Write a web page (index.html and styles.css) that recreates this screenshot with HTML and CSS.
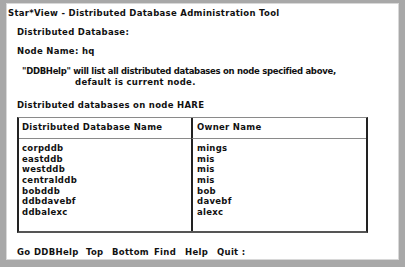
FILE: index.html
```html
<!DOCTYPE html>
<html lang="en">
  <head>
    <meta charset="UTF-8" />
    <title>Star*View - Distributed Database Administration Tool</title>
    <link rel="stylesheet" href="styles.css">
  </head>
  <body>
    <div class="screen">
      <div class="title">Star*View - Distributed Database Administration Tool</div>

      <div class="field first">Distributed Database:</div>
      <div class="field">Node Name: hq</div>

      <div class="help">
        <div class="help-line">"DDBHelp" will list all distributed databases on node specified above,</div>
        <div class="help-cont">default is current node.</div>
      </div>

      <div class="caption">Distributed databases on node HARE</div>

      <div class="ddb-table">
        <div class="cell head">Distributed Database Name</div>
        <div class="cell head right">Owner Name</div>
        <div class="cell body">
          <div>corpddb</div>
          <div>eastddb</div>
          <div>westddb</div>
          <div>centralddb</div>
          <div>bobddb</div>
          <div>ddbdavebf</div>
          <div>ddbalexc</div>
        </div>
        <div class="cell body right">
          <div>mings</div>
          <div>mis</div>
          <div>mis</div>
          <div>mis</div>
          <div>bob</div>
          <div>davebf</div>
          <div>alexc</div>
        </div>
      </div>

      <div class="menu">
        <span class="m-go">Go</span>
        <span class="m-ddb">DDBHelp</span>
        <span class="m-top">Top</span>
        <span class="m-bottom">Bottom</span>
        <span class="m-find">Find</span>
        <span class="m-help">Help</span>
        <span class="m-quit">Quit :</span>
      </div>
    </div>
  </body>
</html>
```

FILE: styles.css
```css
body {
  margin: 0;
  background-color: #a8a8a8;
  font-family: "DejaVu Sans", Verdana, sans-serif;
  font-weight: bold;
  font-size: 8.5px;
  letter-spacing: 0.3px;
  line-height: 10.67px;
  color: #111;
}
.screen {
  margin: 3px 6px 0 6px;
  width: 391px;
  height: 255px;
  background-color: white;
  border: 1px solid #d8d8d8;
  overflow: hidden;
}
.title {
  margin: 4px 0 0 1px;
}
.field {
  margin: 9px 0 0 10px;
}
.field.first {
  margin-top: 8px;
}
.help {
  margin: 9px 0 0 15px;
}
.help-line {
  letter-spacing: -0.3px;
}
.help-cont {
  padding-left: 53px;
}
.caption {
  margin: 13px 0 0 10px;
}
.ddb-table {
  margin: 6px 0 0 10px;
  width: 347px;
  display: grid;
  grid-template-columns: 172px 1fr;
  border-top: 1px solid #8a8a8a;
  border-bottom: 2px solid #555;
  border-left: 2px solid #222;
  border-right: 2px solid #222;
}
.cell {
  padding-left: 3px;
}
.cell.right {
  border-left: 2px solid #222;
  padding-left: 4px;
}
.cell.head {
  height: 20px;
  line-height: 19px;
  border-bottom: 1px solid #8a8a8a;
}
.cell.body {
  padding-top: 4px;
  height: 88px;
}
.menu {
  margin: 14px 0 0 10px;
  display: flex;
}
.menu span {
  display: block;
}
.m-go { width: 17px; }
.m-ddb { width: 52px; }
.m-top { width: 26px; }
.m-bottom { width: 42px; }
.m-find { width: 31px; }
.m-help { width: 32px; }
```
